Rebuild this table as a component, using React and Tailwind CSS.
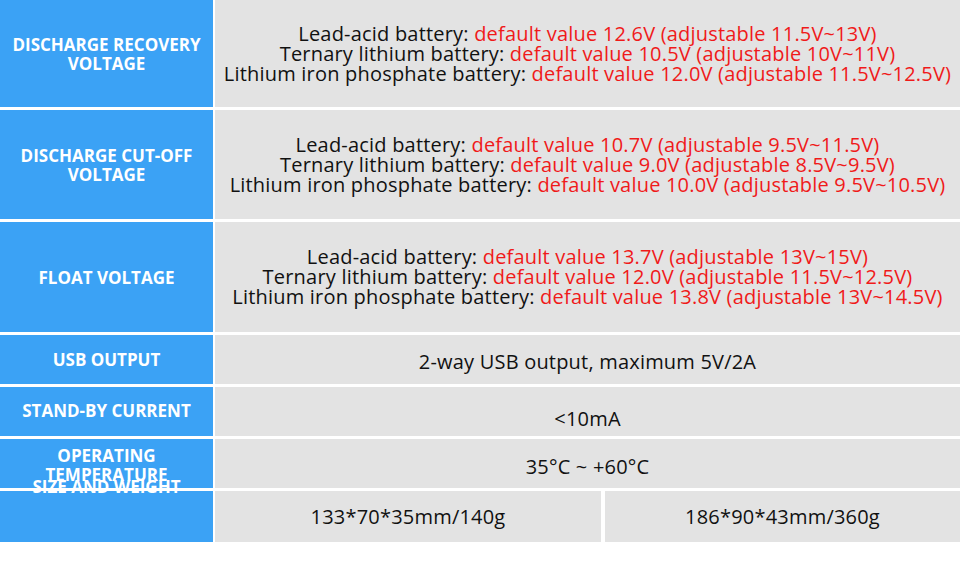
import React from "react";

const voltageRows = [
  {
    label: ["DISCHARGE RECOVERY", "VOLTAGE"],
    h: "h-[107px]",
    lines: [
      ["Lead-acid battery: ", "default value 12.6V (adjustable 11.5V~13V)"],
      ["Ternary lithium battery: ", "default value 10.5V (adjustable 10V~11V)"],
      ["Lithium iron phosphate battery: ", "default value 12.0V (adjustable 11.5V~12.5V)"],
    ],
  },
  {
    label: ["DISCHARGE CUT-OFF", "VOLTAGE"],
    h: "h-[109px]",
    lines: [
      ["Lead-acid battery: ", "default value 10.7V (adjustable 9.5V~11.5V)"],
      ["Ternary lithium battery: ", "default value 9.0V (adjustable 8.5V~9.5V)"],
      ["Lithium iron phosphate battery: ", "default value 10.0V (adjustable 9.5V~10.5V)"],
    ],
  },
  {
    label: ["FLOAT VOLTAGE"],
    h: "h-[110px]",
    lines: [
      ["Lead-acid battery: ", "default value 13.7V (adjustable 13V~15V)"],
      ["Ternary lithium battery: ", "default value 12.0V (adjustable 11.5V~12.5V)"],
      ["Lithium iron phosphate battery: ", "default value 13.8V (adjustable 13V~14.5V)"],
    ],
  },
];

const Label = ({ children, className = "" }) => (
  <div
    className={`w-[213px] shrink-0 bg-[#3ba2f5] text-white font-bold text-[17px] leading-[19px] text-center flex flex-col ${className}`}
  >
    {children}
  </div>
);

const Cell = ({ children, className = "" }) => (
  <div
    className={`flex-1 bg-[#e3e3e3] text-[#111] text-[20px] tracking-[0.2px] flex items-center justify-center ${className}`}
  >
    {children}
  </div>
);

export default function App() {
  return (
    <div
      className="w-[960px] h-[571px] bg-white flex flex-col gap-[3px] overflow-hidden"
      style={{ fontFamily: '"Open Sans", "Noto Sans", sans-serif' }}
    >
      {voltageRows.map((row, i) => (
        <div key={i} className={`flex gap-[2px] ${row.h}`}>
          <Label className="justify-center">
            {row.label.map((l) => (
              <span key={l}>{l}</span>
            ))}
          </Label>
          <Cell className="flex-col leading-[20px]">
            {row.lines.map(([a, b]) => (
              <div key={a} className="whitespace-nowrap">
                {a}
                <span className="text-[#f01a1a]">{b}</span>
              </div>
            ))}
          </Cell>
        </div>
      ))}

      <div className="flex gap-[2px] h-[49px]">
        <Label className="justify-center">USB OUTPUT</Label>
        <Cell className="pt-[4px]">2-way USB output, maximum 5V/2A</Cell>
      </div>

      <div className="flex gap-[2px] h-[49px]">
        <Label className="justify-center pb-[2px]">STAND-BY CURRENT</Label>
        <Cell className="pt-[14px]">&lt;10mA</Cell>
      </div>

      <div className="flex gap-[2px] h-[49px]">
        <Label className="pt-[7px] leading-[18px]">
          <span>OPERATING</span>
          <span>TEMPERATURE</span>
        </Label>
        <Cell className="pt-[6px]">35°C ~ +60°C</Cell>
      </div>

      <div className="flex gap-[2px] h-[51px]">
        <Label>
          <span className="-mt-[14px]">SIZE AND WEIGHT</span>
        </Label>
        <div className="flex-1 flex gap-[4px]">
          <Cell>133*70*35mm/140g</Cell>
          <Cell className="w-[355px] flex-none">186*90*43mm/360g</Cell>
        </div>
      </div>
    </div>
  );
}
